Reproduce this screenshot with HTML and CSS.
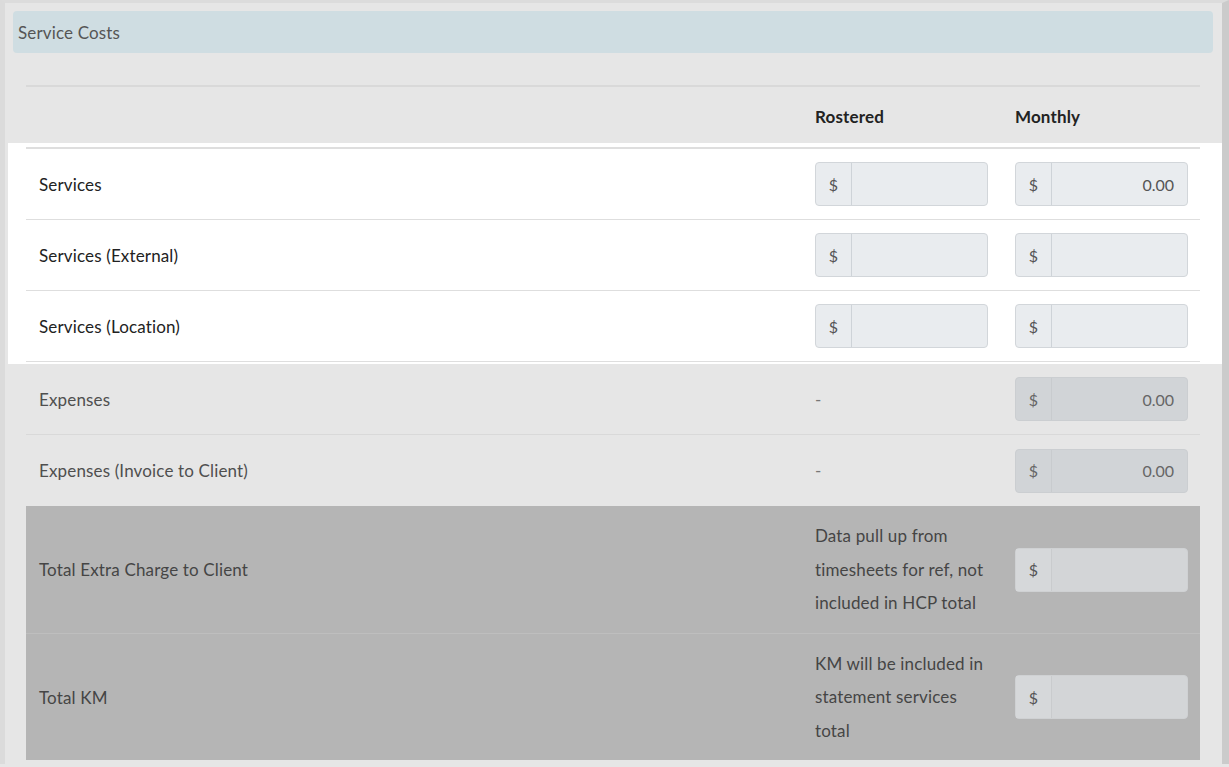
FILE: index.html
```html
<!DOCTYPE html>
<html>
<head>
<meta charset="utf-8">
<title>Service Costs</title>
<link rel="stylesheet" href="styles.css">
</head>
<body>
<div class="page">
  <div class="panel-heading">Service Costs</div>

  <div class="thead">
    <div class="row head-row">
      <div class="cell"></div>
      <div class="cell th">Rostered</div>
      <div class="cell th">Monthly</div>
    </div>
  </div>

  <div class="band band-white">
    <div class="row body-row first">
      <div class="cell label">Services</div>
      <div class="cell"><div class="igroup"><span class="addon">$</span><span class="val"></span></div></div>
      <div class="cell"><div class="igroup"><span class="addon">$</span><span class="val">0.00</span></div></div>
    </div>
    <div class="row body-row">
      <div class="cell label">Services (External)</div>
      <div class="cell"><div class="igroup"><span class="addon">$</span><span class="val"></span></div></div>
      <div class="cell"><div class="igroup"><span class="addon">$</span><span class="val"></span></div></div>
    </div>
    <div class="row body-row last">
      <div class="cell label">Services (Location)</div>
      <div class="cell"><div class="igroup"><span class="addon">$</span><span class="val"></span></div></div>
      <div class="cell"><div class="igroup"><span class="addon">$</span><span class="val"></span></div></div>
    </div>
  </div>

  <div class="band band-dim">
    <div class="row body-row">
      <div class="cell label">Expenses</div>
      <div class="cell dash">-</div>
      <div class="cell"><div class="igroup"><span class="addon">$</span><span class="val">0.00</span></div></div>
    </div>
    <div class="row body-row sep">
      <div class="cell label">Expenses (Invoice to Client)</div>
      <div class="cell dash">-</div>
      <div class="cell"><div class="igroup"><span class="addon">$</span><span class="val">0.00</span></div></div>
    </div>
  </div>

  <div class="band band-dark">
    <div class="row tall-row">
      <div class="cell label">Total Extra Charge to Client</div>
      <div class="cell note">Data pull up from timesheets for ref, not included in HCP total</div>
      <div class="cell"><div class="igroup"><span class="addon">$</span><span class="val"></span></div></div>
    </div>
    <div class="row tall-row sep">
      <div class="cell label">Total KM</div>
      <div class="cell note">KM will be included in statement services total</div>
      <div class="cell"><div class="igroup"><span class="addon">$</span><span class="val"></span></div></div>
    </div>
  </div>
</div>
</body>
</html>
```

FILE: styles.css
```css
html, body {
  margin: 0;
  padding: 0;
}

body {
  background: #e6e6e6;
  font-family: Lato, "Open Sans", "Liberation Sans", sans-serif;
  font-size: 17px;
  letter-spacing: 0.15px;
  color: #222;
  height: 767px;
  overflow: hidden;
}

.page {
  border-top: 3px solid #dcdcdc;
  border-left: 5px solid #dbdbdb;
  border-right: 7px solid #cbcbcb;
  min-height: 764px;
  box-sizing: border-box;
}

.panel-heading {
  margin: 8px 9px 0 8px;
  height: 42px;
  line-height: 44px;
  background: #cfdde2;
  border-radius: 4px;
  padding-left: 5px;
  color: #555;
  font-size: 17px;
}

.thead {
  margin: 32px 22px 0 21px;
  border-top: 2px solid #d9d9d9;
}

.row {
  display: grid;
  grid-template-columns: 1fr 200px 198px;
  align-items: center;
}

.cell {
  padding: 0 13px;
}

.head-row {
  height: 56px;
  padding-top: 2px;
  box-sizing: border-box;
}

.th {
  font-weight: bold;
  color: #222;
}

.band-white {
  background: #fff;
  margin-left: 3px;
  padding: 4px 22px 2px 18px;
}

.body-row {
  height: 70px;
  border-top: 1px solid #dedede;
}

.body-row.first {
  border-top: 2px solid #dedede;
}

.body-row.last {
  height: 70px;
  border-bottom: 1px solid #dedede;
}

.band-white .label {
  color: #222;
}

.band-dim {
  margin: 0 22px 0 21px;
}

.band-dim .body-row {
  border-top: none;
}

.band-dim .body-row.sep {
  border-top: 1px solid #d9d9d9;
  height: 71px;
}

.band-dim .label {
  color: #4f4f4f;
}

.dash {
  color: #777;
}

.igroup {
  display: flex;
  width: 173px;
  height: 44px;
  box-sizing: border-box;
  border: 1px solid #d2d6da;
  border-radius: 4px;
  background: #e9ecef;
  color: #555;
  font-size: 16px;
  letter-spacing: 0;
}

.addon {
  width: 35px;
  flex: none;
  display: flex;
  align-items: center;
  justify-content: center;
  border-right: 1px solid #ced3d8;
}

.val {
  flex: 1;
  display: flex;
  align-items: center;
  justify-content: flex-end;
  padding-right: 13px;
}

.band-dim .igroup {
  background: #d1d4d7;
  border-color: #cbced1;
  color: #666;
}

.band-dim .addon {
  border-right-color: #c8cbce;
}

.band-dark {
  margin: 0 22px 0 21px;
  background: #b5b5b5;
}

.tall-row {
  height: 127px;
}

.tall-row.sep {
  border-top: 1px solid #bebebe;
  height: 126px;
}

.band-dark .label,
.band-dark .note {
  color: #454545;
}

.note {
  line-height: 33.5px;
}

.band-dark .igroup {
  background: #d3d5d7;
  border-color: #cfd1d3;
  color: #555;
}

.band-dark .addon {
  background: #d6d8da;
  border-right-color: #c9cbcd;
}
```
